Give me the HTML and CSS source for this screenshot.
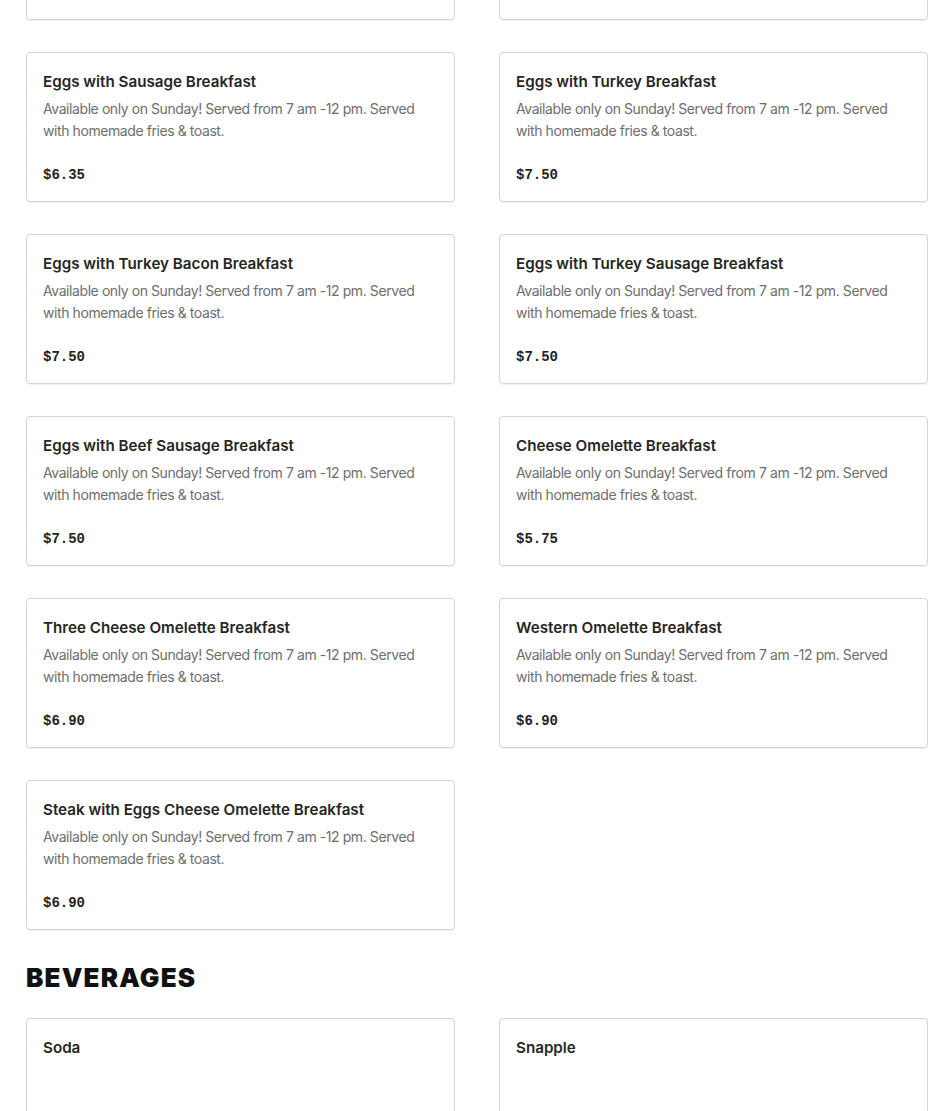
FILE: index.html
```html
<!DOCTYPE html>
<html>
<head>
<meta charset="utf-8">
<link rel="stylesheet" href="styles.css">
</head>
<body>
<main class="menu">
  <section class="section">
    <div class="grid shifted">
      <div class="card"><div class="title">Eggs with Bacon Breakfast</div><div class="desc">Available only on Sunday! Served from 7 am -12 pm. Served with homemade fries &amp; toast.</div><div class="price">$6.35</div></div>
      <div class="card"><div class="title">Eggs with Ham Breakfast</div><div class="desc">Available only on Sunday! Served from 7 am -12 pm. Served with homemade fries &amp; toast.</div><div class="price">$6.35</div></div>
      <div class="card"><div class="title">Eggs with Sausage Breakfast</div><div class="desc">Available only on Sunday! Served from 7 am -12 pm. Served with homemade fries &amp; toast.</div><div class="price">$6.35</div></div>
      <div class="card"><div class="title">Eggs with Turkey Breakfast</div><div class="desc">Available only on Sunday! Served from 7 am -12 pm. Served with homemade fries &amp; toast.</div><div class="price">$7.50</div></div>
      <div class="card"><div class="title">Eggs with Turkey Bacon Breakfast</div><div class="desc">Available only on Sunday! Served from 7 am -12 pm. Served with homemade fries &amp; toast.</div><div class="price">$7.50</div></div>
      <div class="card"><div class="title">Eggs with Turkey Sausage Breakfast</div><div class="desc">Available only on Sunday! Served from 7 am -12 pm. Served with homemade fries &amp; toast.</div><div class="price">$7.50</div></div>
      <div class="card"><div class="title">Eggs with Beef Sausage Breakfast</div><div class="desc">Available only on Sunday! Served from 7 am -12 pm. Served with homemade fries &amp; toast.</div><div class="price">$7.50</div></div>
      <div class="card"><div class="title">Cheese Omelette Breakfast</div><div class="desc">Available only on Sunday! Served from 7 am -12 pm. Served with homemade fries &amp; toast.</div><div class="price">$5.75</div></div>
      <div class="card"><div class="title">Three Cheese Omelette Breakfast</div><div class="desc">Available only on Sunday! Served from 7 am -12 pm. Served with homemade fries &amp; toast.</div><div class="price">$6.90</div></div>
      <div class="card"><div class="title">Western Omelette Breakfast</div><div class="desc">Available only on Sunday! Served from 7 am -12 pm. Served with homemade fries &amp; toast.</div><div class="price">$6.90</div></div>
      <div class="card"><div class="title">Steak with Eggs Cheese Omelette Breakfast</div><div class="desc">Available only on Sunday! Served from 7 am -12 pm. Served with homemade fries &amp; toast.</div><div class="price">$6.90</div></div>
    </div>
  </section>
  <section class="section">
    <h2 class="heading">BEVERAGES</h2>
    <div class="grid">
      <div class="card"><div class="title">Soda</div></div>
      <div class="card"><div class="title">Snapple</div></div>
    </div>
  </section>
</main>
</body>
</html>
```
FILE: styles.css
```css
html, body {
  margin: 0;
  padding: 0;
  background: #ffffff;
  overflow: hidden;
}
body {
  font-family: Inter, "Noto Sans", sans-serif;
  color: #222222;
}
.menu {
  padding: 0 22px 0 26px;
}
.grid {
  display: grid;
  grid-template-columns: 429px 429px;
  column-gap: 44px;
  row-gap: 32px;
}
.shifted {
  margin-top: -130px;
}
.card {
  box-sizing: border-box;
  height: 150px;
  border: 1px solid #d4d4d4;
  border-radius: 4px;
  padding: 17px 16px 15px 16px;
  box-shadow: 0 1px 1px rgba(0,0,0,0.06);
  display: flex;
  flex-direction: column;
}
.title {
  font-size: 15.2px;
  line-height: 24px;
  font-weight: 600;
  color: #262626;
  margin-bottom: 4px;
}
.desc {
  font-size: 14px;
  line-height: 22px;
  color: #6e6e6e;
  letter-spacing: -0.42px;
  padding-right: 8px;
}
.price {
  margin-top: auto;
  font-family: "Liberation Mono", "DejaVu Sans Mono", monospace;
  font-size: 14px;
  font-weight: 700;
  line-height: 21px;
  color: #222222;
}
.heading {
  margin: 32px 0 24px 0;
  font-family: Inter, sans-serif;
  font-weight: 900;
  font-size: 26px;
  line-height: 32px;
  letter-spacing: 1.2px;
  color: #111111;
}
```
